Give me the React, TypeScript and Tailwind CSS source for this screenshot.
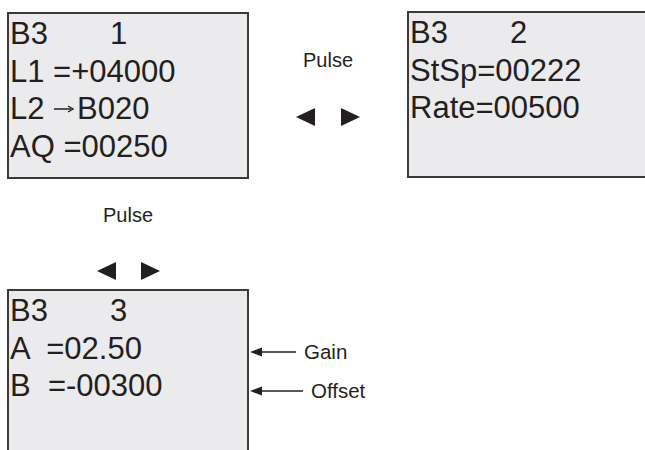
import React from 'react'

type Row = React.ReactNode

function Screen({ rows, className }: { rows: Row[]; className: string }) {
  return (
    <div className={`bg-[#ebebed] border-[#3a3a3a] pl-[1px] pt-[1px] text-[31px] leading-[37.5px] whitespace-pre ${className}`}>
      {rows.map((r, i) => (
        <div key={i}>{r}</div>
      ))}
    </div>
  )
}

function Title({ n }: { n: string }) {
  return (
    <>
      <span className="inline-block w-[100px]">B3</span>
      {n}
    </>
  )
}

function Arrows({ gap }: { gap: string }) {
  return (
    <div className={`flex ${gap}`}>
      <svg width="19" height="18" viewBox="0 0 19 18">
        <polygon points="0,9 19,0 19,18" fill="#231f20" />
      </svg>
      <svg width="19" height="18" viewBox="0 0 19 18">
        <polygon points="19,9 0,0 0,18" fill="#231f20" />
      </svg>
    </div>
  )
}

function Note({ label, len }: { label: string; len: number }) {
  return (
    <div className="flex h-[38.5px] items-center gap-[8px]">
      <svg width={len} height="10" viewBox={`0 0 ${len} 10`}>
        <polygon points="0,5 12,0.5 12,9.5" fill="#231f20" />
        <line x1="10" y1="5" x2={len} y2="5" stroke="#231f20" strokeWidth="1.5" />
      </svg>
      <span className="text-[20.5px] leading-[22px]">{label}</span>
    </div>
  )
}

export default function App() {
  return (
    <div className="w-[645px] h-[450px] overflow-hidden bg-white text-[#231f20] font-['Liberation_Sans',Arial,sans-serif]">
      <div className="flex items-start pl-[7px] pt-[11px]">
        <Screen
          className="mt-[1px] w-[242px] h-[167px] shrink-0 border-2"
          rows={[
            <Title n="1" />,
            'L1 =+04000',
            <>
              L2{' '}
              <svg className="inline-block align-baseline mr-[3px] ml-[1px]" width="20" height="19" viewBox="0 0 20 19">
                <line x1="0" y1="9" x2="17" y2="9" stroke="#231f20" strokeWidth="1.5" />
                <polyline points="14,6 19,9 14,12" fill="none" stroke="#231f20" strokeWidth="1.4" />
              </svg>
              B020
            </>,
            'AQ =00250',
          ]}
        />
        <div className="w-[158px] shrink-0 flex flex-col items-center pt-[38px]">
          <span className="text-[20px] leading-[22px]">Pulse</span>
          <div className="mt-[37px]">
            <Arrows gap="gap-[26px]" />
          </div>
        </div>
        <Screen
          className="w-[270px] h-[167px] shrink-0 border-2 border-r-0"
          rows={[<Title n="2" />, 'StSp=00222', 'Rate=00500']}
        />
      </div>

      <div className="pl-[7px]">
        <div className="w-[242px] flex flex-col items-center">
          <span className="mt-[25px] text-[20px] leading-[22px]">Pulse</span>
          <div className="mt-[36px] pl-[1px]">
            <Arrows gap="gap-[25px]" />
          </div>
        </div>
        <div className="mt-[9px] flex items-start">
          <Screen
            className="w-[242px] h-[175px] shrink-0 border-2 border-b-0"
            rows={[<Title n="3" />, 'A  =02.50', 'B  =-00300']}
          />
          <div className="pt-[44px] pl-[1px]">
            <Note label="Gain" len={46} />
            <Note label="Offset" len={53} />
          </div>
        </div>
      </div>
    </div>
  )
}
